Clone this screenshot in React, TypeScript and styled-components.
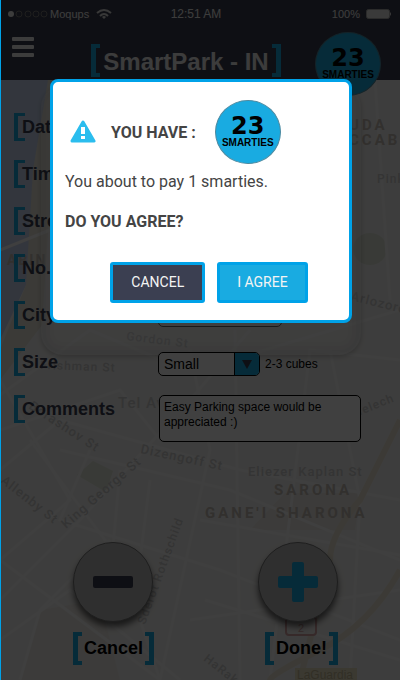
import React from "react";
import styled, { createGlobalStyle } from "styled-components";

const navy = "#3b3f51";
const accent = "#19abe1";
const edge = "#00a2e8";
const arial = '"Liberation Sans", Arial, sans-serif';

const GlobalStyle = createGlobalStyle`
  *, *::before, *::after { box-sizing: border-box; }
  body { margin: 0; background: #f2f2f0; }
  button, input, select, textarea { font: inherit; margin: 0; }
`;

const Page = styled.div`
  position: relative;
  isolation: isolate;
  min-height: 100vh;
  overflow: hidden;
  font-family: ${arial};
  color: #000;
`;

const MapSvg = styled.svg`
  position: absolute;
  inset: 0;
  width: 100%;
  height: 100%;
  z-index: -1;
`;

const Header = styled.header`
  position: relative;
  height: 80px;
  background: ${navy};
  color: #fff;
`;

const StatusBar = styled.div`
  display: grid;
  grid-template-columns: 1fr auto 1fr;
  align-items: center;
  height: 28px;
  padding: 0 8px;
  font-size: 11px;
  color: #f0f0f0;
`;

const Clock = styled.span`
  margin-right: 8px;
  font-size: 12px;
`;

const StatusSide = styled.div<{ $end?: boolean }>`
  display: flex;
  align-items: center;
  justify-content: ${(p) => (p.$end ? "flex-end" : "flex-start")};
  gap: ${(p) => (p.$end ? 6 : 2)}px;
`;

const Dots = styled.svg`
  width: 40px;
  height: 8px;
`;
const Wifi = styled.svg`
  width: 16px;
  height: 12px;
  margin-left: 5px;
`;
const Battery = styled.svg`
  width: 26px;
  height: 10px;
`;

const MenuButton = styled.button`
  position: absolute;
  left: 11px;
  top: 36px;
  display: flex;
  flex-direction: column;
  gap: 4px;
  padding: 1px;
  border: 0;
  background: none;
`;
const MenuBar = styled.span`
  width: 22px;
  height: 4px;
  border-radius: 1px;
  background: #f0f0f0;
`;

const TitleRow = styled.div`
  display: flex;
  justify-content: center;
  align-items: center;
  gap: 3px;
  height: 36px;
  margin-top: 14px;
  padding-right: 28px;
`;

const Title = styled.h1`
  margin: 0;
  padding-top: 3px;
  font-size: 24px;
  line-height: 28px;
  color: #ededed;
`;

const Bracket = styled.span<{ $side: "left" | "right"; $short?: boolean }>`
  flex: none;
  width: ${(p) => (p.$short ? 11 : 9)}px;
  height: ${(p) => (p.$short ? 28 : 33)}px;
  border: solid ${accent};
  border-width: ${(p) =>
    p.$side === "left" ? "4px 0 4px 5px" : "4px 5px 4px 0"};
  ${(p) => p.$short && "border-width: 3px 0 3px 4px;"}
`;

const Badge = styled.div<{ $floating?: boolean }>`
  display: flex;
  flex-direction: column;
  align-items: center;
  flex: none;
  width: 66px;
  height: 64px;
  padding-top: 14px;
  border: 1px solid #4d8aa0;
  border-radius: 50%;
  background: ${accent};
  color: #000;
  ${(p) => p.$floating && "position: absolute; right: 19px; top: 32px; z-index: 1;"}
`;
const Count = styled.strong`
  font: bold 24px/22px "DejaVu Sans", sans-serif;
`;
const Unit = styled.span`
  font: bold 10px/11px ${arial};
`;

const Form = styled.form`
  position: relative;
  display: flex;
  flex-direction: column;
  gap: 19px;
  padding: 33px 40px 0 14px;
`;

const CardShade = styled.div`
  position: absolute;
  left: 41px;
  right: 39px;
  top: 5px;
  height: 270px;
  border-radius: 22px;
  background: rgba(255, 255, 255, 0.25);
  border: 1px solid rgba(0, 0, 0, 0.05);
  box-shadow: 0 2px 5px rgba(0, 0, 0, 0.2),
    inset 0 0 0 4px rgba(0, 0, 0, 0.02),
    inset 0 0 0 8px rgba(0, 0, 0, 0.02),
    inset 0 0 0 12px rgba(0, 0, 0, 0.02);
`;

const Row = styled.div<{ $tall?: boolean }>`
  position: relative;
  display: grid;
  grid-template-columns: 144px 1fr;
  align-items: ${(p) => (p.$tall ? "start" : "center")};
  height: ${(p) => (p.$tall ? 48 : 28)}px;
`;

const Label = styled.label`
  display: flex;
  align-items: center;
  font-size: 18px;
  line-height: 22px;
  font-weight: bold;
  color: ${navy};
`;
const LabelText = styled.span`
  margin-left: -3px;
`;

const TextBox = styled.input`
  width: 124px;
  height: 24px;
  padding: 0 5px;
  border: 1px solid #666;
  border-radius: 5px;
  background: #fff;
  font-size: 14px;
`;

const SizeGroup = styled.div`
  display: flex;
  align-items: center;
  gap: 5px;
  padding-top: 4px;
  font-size: 12px;
`;
const Drop = styled.div`
  display: flex;
  width: 102px;
  height: 24px;
  border: 1px solid #000;
  border-radius: 5px;
  background: #fff;
  overflow: hidden;
`;
const Select = styled.select`
  appearance: none;
  flex: 1;
  min-width: 0;
  padding: 0 5px;
  border: 0;
  background: transparent;
  color: #000;
  font-size: 14px;
`;
const DropArrow = styled.span`
  display: grid;
  place-items: center;
  width: 25px;
  border-left: 1px solid #000;
  background: ${accent};
  pointer-events: none;
`;
const Notes = styled.textarea`
  display: block;
  width: 100%;
  max-width: 202px;
  height: 47px;
  padding: 4px;
  margin-left: 1px;
  border: 1px solid #000;
  border-radius: 5px;
  background: #fff;
  color: #000;
  font-size: 12px;
  line-height: 15px;
  resize: none;
  overflow: hidden;
`;

const Actions = styled.div`
  display: grid;
  grid-template-columns: 1fr 1fr;
  padding: 99px 10px 12px 20px;
`;
const Action = styled.button`
  display: flex;
  flex-direction: column;
  align-items: center;
  gap: 10px;
  padding: 0;
  border: 0;
  background: none;
  color: #000;
  font-size: 18px;
  font-weight: bold;
`;
const Disc = styled.span`
  display: grid;
  place-items: center;
  width: 80px;
  height: 80px;
  border: 1px solid #777;
  border-radius: 50%;
  background: #bcbcbc;
  box-shadow: 0 5px 6px rgba(0, 0, 0, 0.6);
`;
const Caption = styled.span<{ $shifted?: boolean }>`
  display: flex;
  align-items: center;
  gap: 2px;
  padding-left: ${(p) => (p.$shifted ? 8 : 2)}px;
`;

const Backdrop = styled.div`
  position: absolute;
  inset: 0;
  z-index: 2;
  padding: 79px 48px 0 49px;
  border-left: 1px solid ${edge};
  background: rgba(0, 0, 0, 0.75);
`;

const Dialog = styled.section`
  display: flex;
  flex-direction: column;
  max-width: 420px;
  margin: 0 auto;
  padding: 18px 12px 17px;
  border: 3px solid ${edge};
  border-radius: 8px;
  background: #fff;
  color: #444;
  font: 16px/20px Roboto, sans-serif;
`;
const DialogHead = styled.div`
  display: flex;
  align-items: center;
  padding-left: 5px;
`;
const DialogTitle = styled.h2`
  margin: 2px 19px 0 15px;
  font-size: 16px;
  line-height: 20px;
`;
const DialogText = styled.p<{ $strong?: boolean }>`
  margin: ${(p) => (p.$strong ? 20 : 8)}px 0 0;
  font-weight: ${(p) => (p.$strong ? 700 : 400)};
`;
const DialogButtons = styled.div`
  display: flex;
  justify-content: center;
  gap: 12px;
  margin-top: 30px;
  padding-left: 16px;
`;
const DialogButton = styled.button<{ $primary?: boolean }>`
  height: 41px;
  padding: 0 ${(p) => (p.$primary ? 17 : 18)}px 2px;
  border: 3px solid ${edge};
  border-radius: 3px;
  background: ${(p) => (p.$primary ? accent : navy)};
  color: #f4f4f4;
  font-size: 14px;
`;

const streets = [
  "M0 395L90 330L190 372L400 310", "M0 470L60 420L240 470L400 500", "M30 440L120 560L160 680",
  "M0 600L80 520L190 400L250 330", "M0 380L70 500L0 560", "M60 450L230 490L400 560",
  "M90 450L60 520L220 570L400 640", "M160 680L210 450L190 350", "M240 680L235 330",
  "M270 680L310 350L400 360", "M0 640L70 590L180 680", "M0 560L160 680",
  "M200 520L400 555", "M205 600L400 660", "M350 680L360 500L330 350",
  "M375 80L390 300", "M0 250L50 230", "M190 620L400 590", "M20 680L40 610L110 540",
  "M120 470L110 580", "M150 480L140 560", "M0 430L120 390L160 440",
];

interface MapLabel { x: number; y: number; size: number; rotate: number; text: string; spacing?: number; tone?: string }
const districtTone = "#c6beb6";
const places: MapLabel[] = [
  { x: 349, y: 130, size: 15, rotate: 0, text: "UDA", spacing: 3, tone: districtTone },
  { x: 349, y: 145, size: 15, rotate: 0, text: "CCABI", spacing: 3, tone: districtTone },
  { x: 377, y: 183, size: 12, rotate: 0, text: "Pinkas" },
  { x: 350, y: 300, size: 13, rotate: 14, text: "Arlozorov" },
  { x: 7, y: 265, size: 14, rotate: 0, text: "ABIN", spacing: 2, tone: districtTone },
  { x: 40, y: 369, size: 12, rotate: 2, text: "Frishman St" },
  { x: 118, y: 408, size: 15, rotate: 0, text: "Tel Aviv" },
  { x: 126, y: 340, size: 12, rotate: 7, text: "Gordon St" },
  { x: 28, y: 408, size: 13, rotate: 33, text: "Borashov St" },
  { x: 140, y: 453, size: 13, rotate: 12, text: "Dizengoff St" },
  { x: 0, y: 482, size: 13, rotate: 38, text: "Allenby St" },
  { x: 66, y: 529, size: 13, rotate: -41, text: "King George St" },
  { x: 145, y: 625, size: 12, rotate: -70, text: "Sderot Rothschild" },
  { x: 248, y: 476, size: 13, rotate: 0, text: "Eliezer Kaplan St" },
  { x: 274, y: 495, size: 15, rotate: 0, text: "SARONA", spacing: 3, tone: districtTone },
  { x: 205, y: 518, size: 15, rotate: 0, text: "GANE'I SHARONA", spacing: 3, tone: districtTone },
  { x: 353, y: 418, size: 12, rotate: -22, text: "Melech" },
  { x: 203, y: 660, size: 12, rotate: 38, text: "HaRakevet" },
];

function CityMap() {
  return (
    <MapSvg viewBox="0 0 400 680" preserveAspectRatio="xMidYMid slice" aria-hidden="true">
      <rect width="400" height="680" fill="#f4f3f1" />
      <path d="M0 80H88L60 145L45 245L0 340Z" fill="#cbd8f2" />
      <path d="M85 80L53 155L42 325L0 380V350L26 285L33 170L48 80Z" fill="#eae7db" />
      <path d="M77 475L93 461L113 471L106 492Z" fill="#e2e8d9" />
      <ellipse cx="370" cy="249" rx="17" ry="16" fill="#e2e8da" />
      <path d="M285 493H360L355 530H250Z" fill="#efeae5" />
      <path d="M40 610L100 600L120 680H20Z" fill="#f0ece7" />
      {streets.map((d) => (
        <path key={d} d={d} fill="none" stroke="#fafaf9" strokeWidth="3" />
      ))}
      <path d="M400 420L360 500Q330 535 330 560L300 680M400 570Q370 625 320 650T270 680" fill="none" stroke="#efe8d6" strokeWidth="6" />
      <rect x="286" y="617" width="30" height="18" rx="3" fill="#f5f2f0" stroke="#d6a3a3" strokeWidth="2" />
      <text x="301" y="632" fontSize="11" textAnchor="middle" fill="#d6a3a3">2</text>
      <rect x="295" y="668" width="62" height="12" fill="#e9e1c4" />
      <text x="297" y="679" fontSize="12" fill="#c4b994">LaGuardia</text>
      {places.map((p) => (
        <text
          key={p.text}
          x={p.x}
          y={p.y}
          fontSize={p.size}
          fontFamily="Roboto, sans-serif"
          fontWeight={p.tone ? 700 : 500}
          letterSpacing={p.spacing ?? 1}
          fill={p.tone ?? "#cecece"}
          transform={`rotate(${p.rotate} ${p.x} ${p.y})`}
        >
          {p.text}
        </text>
      ))}
    </MapSvg>
  );
}

function SmartiesBadge({ floating }: { floating?: boolean }) {
  return (
    <Badge $floating={floating}>
      <Count>23</Count>
      <Unit>SMARTIES</Unit>
    </Badge>
  );
}

function FieldLabel({ id, children }: { id: string; children: string }) {
  return (
    <Label htmlFor={id}>
      <Bracket $side="left" $short />
      <LabelText>{children}</LabelText>
    </Label>
  );
}

const fields = [
  { id: "date", label: "Date" },
  { id: "time", label: "Time" },
  { id: "street", label: "Street" },
  { id: "number", label: "No." },
  { id: "city", label: "City" },
];

export default function App() {
  return (
    <>
      <GlobalStyle />
      <Page>
        <CityMap />
        <Header>
          <StatusBar>
            <StatusSide>
              <Dots viewBox="0 0 40 8">
                <circle cx="3" cy="4" r="3" fill="#f0f0f0" />
                {[11, 20, 28, 36].map((x) => (
                  <circle key={x} cx={x} cy="4" r="3" fill="none" stroke="#777" strokeWidth="1" />
                ))}
              </Dots>
              <span>Moqups</span>
              <Wifi viewBox="0 0 16 12" fill="none" stroke="#e0e0e0" strokeWidth="2">
                <path d="M1 5Q8 -1 15 5M4 8Q8 4 12 8" />
                <path d="M6 9Q8 7 10 9L8 11Z" fill="#e0e0e0" stroke="none" />
              </Wifi>
            </StatusSide>
            <Clock>12:51 AM</Clock>
            <StatusSide $end>
              <span>100%</span>
              <Battery viewBox="0 0 26 10">
                <rect x="0.5" y="0.5" width="23" height="9" rx="2" fill="#e8e8e8" stroke="#aaa" />
                <path d="M24 3Q26 5 24 7Z" fill="#e8e8e8" />
              </Battery>
            </StatusSide>
          </StatusBar>
          <MenuButton aria-label="Menu">
            <MenuBar />
            <MenuBar />
            <MenuBar />
          </MenuButton>
          <TitleRow>
            <Bracket $side="left" />
            <Title>SmartPark - IN</Title>
            <Bracket $side="right" />
          </TitleRow>
          <SmartiesBadge floating />
        </Header>

        <Form>
          <CardShade />
          {fields.map((f) => (
            <Row key={f.id}>
              <FieldLabel id={f.id}>{f.label}</FieldLabel>
              <TextBox id={f.id} />
            </Row>
          ))}
          <Row>
            <FieldLabel id="size">Size</FieldLabel>
            <SizeGroup>
              <Drop>
                <Select id="size" defaultValue="Small">
                  <option>Small</option>
                  <option>Large</option>
                </Select>
                <DropArrow>
                  <svg width="10" height="9" viewBox="0 0 10 9">
                    <path d="M0 0H10L5 9Z" fill={navy} />
                  </svg>
                </DropArrow>
              </Drop>
              <span>2-3 cubes</span>
            </SizeGroup>
          </Row>
          <Row $tall>
            <FieldLabel id="comments">Comments</FieldLabel>
            <Notes id="comments" defaultValue="Easy Parking space would be appreciated :)" />
          </Row>
        </Form>

        <Actions>
          <Action type="button">
            <Disc>
              <svg width="40" height="40" viewBox="0 0 40 40">
                <rect y="14" width="40" height="12" rx="2" fill={navy} />
              </svg>
            </Disc>
            <Caption>
              <Bracket $side="left" />
              Cancel
              <Bracket $side="right" />
            </Caption>
          </Action>
          <Action type="button">
            <Disc>
              <svg width="40" height="40" viewBox="0 0 40 40" fill={accent}>
                <rect y="14" width="40" height="12" rx="2" />
                <rect x="14" width="12" height="40" rx="2" />
              </svg>
            </Disc>
            <Caption $shifted>
              <Bracket $side="left" />
              Done!
              <Bracket $side="right" />
            </Caption>
          </Action>
        </Actions>

        <Backdrop>
          <Dialog role="dialog" aria-modal="true" aria-labelledby="dialog-title">
            <DialogHead>
              <svg width="26" height="24" viewBox="0 0 26 24" aria-hidden="true">
                <path d="M13 2L24 21H2Z" fill="#2bbdee" stroke="#2bbdee" strokeWidth="3" strokeLinejoin="round" />
                <path d="M11 7H15V14H11ZM11 16H15V19H11Z" fill="#fff" />
              </svg>
              <DialogTitle id="dialog-title">YOU HAVE :</DialogTitle>
              <SmartiesBadge />
            </DialogHead>
            <DialogText>You about to pay 1 smarties.</DialogText>
            <DialogText $strong>DO YOU AGREE?</DialogText>
            <DialogButtons>
              <DialogButton type="button">CANCEL</DialogButton>
              <DialogButton type="button" $primary>
                I AGREE
              </DialogButton>
            </DialogButtons>
          </Dialog>
        </Backdrop>
      </Page>
    </>
  );
}
